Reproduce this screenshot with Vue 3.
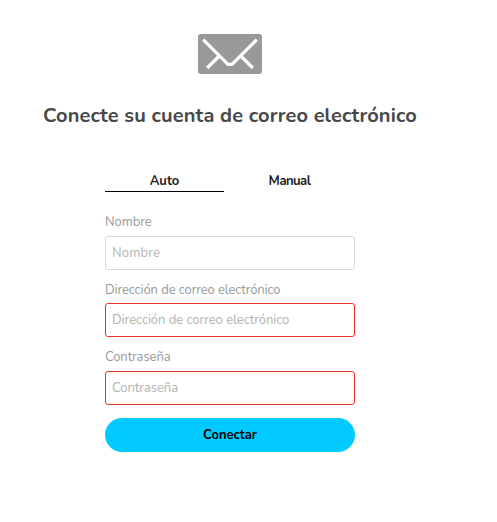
<script setup>
import { ref } from 'vue'

const active = ref('auto')
const tabs = [
  { id: 'auto', label: 'Auto' },
  { id: 'manual', label: 'Manual' },
]
const fields = [
  { id: 'name', label: 'Nombre', type: 'text', invalid: false },
  { id: 'email', label: 'Dirección de correo electrónico', type: 'email', invalid: true },
  { id: 'secret', label: 'Contraseña', type: 'password', invalid: true },
]
</script>

<template>
  <main class="setup">
    <svg class="envelope" viewBox="0 0 64 40" aria-hidden="true">
      <rect width="64" height="40" rx="3" fill="#999" />
      <g fill="none" stroke="#fff" stroke-width="3.3">
        <path d="M5.2 5.6L30 30.4H34L58.8 5.6" />
        <path d="M9.2 34L21.2 22M54.8 34L42.8 22" />
      </g>
    </svg>
    <h2 class="title">Conecte su cuenta de correo electrónico</h2>
    <form class="form" novalidate @submit.prevent>
      <div class="tabs">
        <button
          v-for="t in tabs"
          :key="t.id"
          type="button"
          class="tab"
          :class="[t.id, { active: active === t.id }]"
          @click="active = t.id"
        >{{ t.label }}</button>
      </div>
      <div v-for="f in fields" :key="f.id" class="field" :class="f.id">
        <label :for="f.id">{{ f.label }}</label>
        <input :id="f.id" :type="f.type" :placeholder="f.label" :class="{ invalid: f.invalid }" />
      </div>
      <button class="submit" type="submit">Conectar</button>
    </form>
  </main>
</template>

<style>
body {
  margin: 0;
  background: #fff;
}
</style>

<style scoped>
.setup,
.setup button,
.setup input {
  font-family: Nunito, Lato, "Open Sans", sans-serif;
}
.setup {
  box-sizing: border-box;
  width: 460px;
  height: 522px;
  padding-top: 34px;
  display: flex;
  flex-direction: column;
  align-items: center;
}
.envelope {
  display: block;
  width: 64px;
  height: 40px;
  flex: none;
}
.title {
  margin: 27px 0 0;
  font-size: 20px;
  line-height: 30px;
  font-weight: 700;
  letter-spacing: 0.13px;
  color: #484848;
  white-space: nowrap;
}
.form {
  width: 250px;
  margin-top: 39px;
  display: flex;
  flex-direction: column;
}
.tabs {
  display: flex;
  gap: 6px;
}
.tab {
  box-sizing: border-box;
  width: 119px;
  height: 22px;
  padding: 2px 0 0;
  border: 0;
  border-bottom: 1px solid transparent;
  background: none;
  font-size: 13px;
  line-height: 19px;
  font-weight: 700;
  color: #1c1c1c;
}
.tab.manual {
  letter-spacing: -0.5px;
}
.tab.active {
  border-bottom-color: #000;
}
.field {
  display: flex;
  flex-direction: column;
  margin-top: 10px;
}
.field.name {
  margin-top: 20px;
}
label {
  height: 24px;
  font-size: 13px;
  line-height: 20px;
  letter-spacing: -0.09px;
  color: #999;
}
.field.email label {
  height: 23px;
}
input {
  box-sizing: border-box;
  width: 250px;
  height: 34px;
  padding: 0 6px;
  border: 1px solid #dbdbdb;
  border-radius: 3px;
  background: #fff;
  font-size: 13px;
  letter-spacing: -0.03px;
  outline: none;
}
.field.name input {
  letter-spacing: 0.15px;
}
input.invalid {
  border-color: #e9322d;
}
input::placeholder {
  color: #b3b3b3;
  opacity: 1;
}
.submit {
  height: 34px;
  margin-top: 13px;
  padding: 0;
  border: 0;
  border-radius: 17px;
  background: #00caff;
  font-size: 13px;
  font-weight: 700;
  color: #000;
}
</style>
